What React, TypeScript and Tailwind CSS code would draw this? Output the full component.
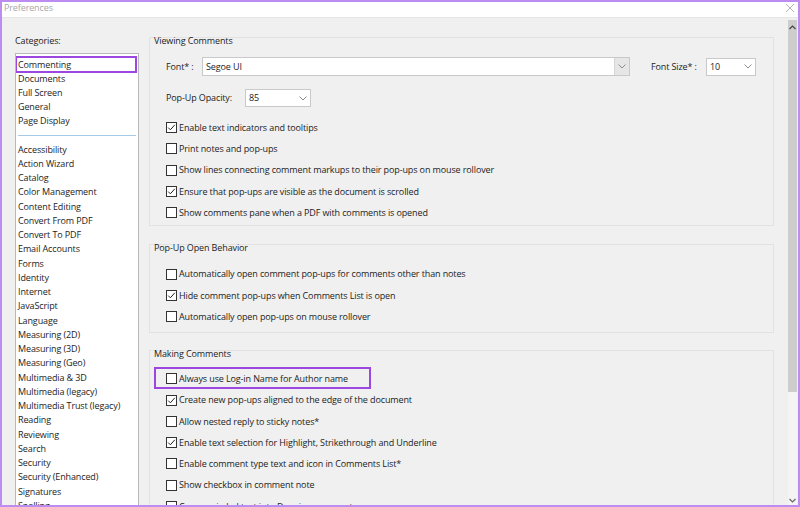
import React from 'react';

const FONT = { fontFamily: '"Open Sans", "Noto Sans", sans-serif', letterSpacing: '-0.12px' };

const topCategories = ['Commenting', 'Documents', 'Full Screen', 'General', 'Page Display'];
const moreCategories = [
  'Accessibility',
  'Action Wizard',
  'Catalog',
  'Color Management',
  'Content Editing',
  'Convert From PDF',
  'Convert To PDF',
  'Email Accounts',
  'Forms',
  'Identity',
  'Internet',
  'JavaScript',
  'Language',
  'Measuring (2D)',
  'Measuring (3D)',
  'Measuring (Geo)',
  'Multimedia & 3D',
  'Multimedia (legacy)',
  'Multimedia Trust (legacy)',
  'Reading',
  'Reviewing',
  'Search',
  'Security',
  'Security (Enhanced)',
  'Signatures',
  'Spelling',
];

const Chevron = () => (
  <svg width="8" height="5" viewBox="0 0 8 5" fill="none">
    <path d="M0.5 0.5 L4 4 L7.5 0.5" stroke="#8a8a8a" strokeWidth="1" />
  </svg>
);

const Checkbox = ({ checked, label }: { checked?: boolean; label: string }) => (
  <div className="flex items-center h-[21.3px]">
    <div className="w-[11px] h-[11px] border border-[#333] bg-white flex items-center justify-center shrink-0">
      {checked && (
        <svg width="9" height="9" viewBox="0 0 9 9" fill="none">
          <path d="M1.2 4.6 L3.4 6.8 L7.8 1.8" stroke="#222" strokeWidth="1" />
        </svg>
      )}
    </div>
    <span className="ml-[2px] whitespace-nowrap">{label}</span>
  </div>
);

const Group = ({ title, children, className }: { title: string; children: React.ReactNode; className?: string }) => (
  <div className={`border border-[#e2e2e2] ${className ?? ''}`}>
    <div className="pl-[4px] -mt-[4px] leading-[14px] h-[14px]">{title}</div>
    {children}
  </div>
);

const App = () => {
  return (
    <div
      className="w-[800px] h-[507px] border-2 border-[#bd8cf0] bg-[#f0f0f0] flex flex-col overflow-hidden text-[9px] text-[#1c1c1c]"
      style={FONT}
    >
      {/* Title bar */}
      <div className="h-[16px] bg-white flex items-center justify-between shrink-0 border-b border-[#e6e6e6]">
        <span className="pl-[2px] -mt-[3px] text-[9px] text-[#a8a8a8]">Preferences</span>
        <svg width="10" height="10" viewBox="0 0 10 10" className="mr-[3px] -mt-[3px]">
          <path d="M1 1 L9 9 M9 1 L1 9" stroke="#b5b5b5" strokeWidth="1" />
        </svg>
      </div>

      <div className="flex flex-1 min-h-0">
        {/* Categories */}
        <div className="w-[137px] pl-[13px] pt-[16px] flex flex-col shrink-0">
          <div className="leading-[14px] h-[19px]">Categories:</div>
          <div className="flex-1 bg-white border border-[#b9b9b9] border-b-0 pt-[2px] overflow-hidden">
            <div className="border-2 border-[#9b47e0] h-[17px] flex items-center pl-[1px] -ml-[1px] mr-[1px] -mb-[1.5px]">
              {topCategories[0]}
            </div>
            {topCategories.slice(1).map((c) => (
              <div key={c} className="h-[14.25px] leading-[14.25px] pl-[2px]">
                {c}
              </div>
            ))}
            <div className="mx-[2px] mt-[6px] mb-[7px] h-px bg-[#a7cbe6]" />
            {moreCategories.map((c) => (
              <div key={c} className="h-[14.25px] leading-[14.25px] pl-[2px] whitespace-nowrap">
                {c}
              </div>
            ))}
          </div>
        </div>

        {/* Settings */}
        <div className="flex-1 min-w-0 pl-[10px] pr-[14px] pt-[19px] overflow-hidden">
          <Group title="Viewing Comments" className="pb-[2px]">
            <div className="flex items-center mt-[9px] h-[19px] pl-[16px]">
              <span className="w-[36px]">Font* :</span>
              <div className="w-[428px] h-[19px] border border-[#c9c9c9] bg-white flex items-center">
                <span className="flex-1 pl-[3px]">Segoe UI</span>
                <div className="w-[15px] h-full bg-[#e6e6e6] border-l border-[#d6d6d6] flex items-center justify-center">
                  <Chevron />
                </div>
              </div>
              <span className="ml-[21px] w-[55px]">Font Size* :</span>
              <div className="w-[50px] h-[18px] border border-[#c9c9c9] bg-white flex items-center justify-between px-[3px]">
                <span>10</span>
                <Chevron />
              </div>
            </div>
            <div className="flex items-center mt-[13px] h-[18px] pl-[16px]">
              <span className="w-[79px]">Pop-Up Opacity:</span>
              <div className="w-[66px] h-[18px] border border-[#c9c9c9] bg-white flex items-center justify-between px-[3px]">
                <span>85</span>
                <Chevron />
              </div>
            </div>
            <div className="mt-[10px] pl-[16px]">
              <Checkbox checked label="Enable text indicators and tooltips" />
              <Checkbox label="Print notes and pop-ups" />
              <Checkbox label="Show lines connecting comment markups to their pop-ups on mouse rollover" />
              <Checkbox checked label="Ensure that pop-ups are visible as the document is scrolled" />
              <Checkbox label="Show comments pane when a PDF with comments is opened" />
            </div>
          </Group>

          <Group title="Pop-Up Open Behavior" className="mt-[18px] pb-[5px]">
            <div className="mt-[8px] pl-[16px]">
              <Checkbox label="Automatically open comment pop-ups for comments other than notes" />
              <Checkbox checked label="Hide comment pop-ups when Comments List is open" />
              <Checkbox label="Automatically open pop-ups on mouse rollover" />
            </div>
          </Group>

          <Group title="Making Comments" className="mt-[17px] pb-[6px]">
            <div className="mt-[6px]">
              <div className="ml-[4px] w-[217px] border-2 border-[#9b47e0] pl-[10px] h-[22px] flex items-center">
                <Checkbox label="Always use Log-in Name for Author name" />
              </div>
              <div className="pl-[16px]">
                <Checkbox checked label="Create new pop-ups aligned to the edge of the document" />
                <Checkbox label="Allow nested reply to sticky notes*" />
                <Checkbox checked label="Enable text selection for Highlight, Strikethrough and Underline" />
                <Checkbox label="Enable comment type text and icon in Comments List*" />
                <Checkbox label="Show checkbox in comment note" />
                <Checkbox label="Copy encircled text into Drawing comment pop-ups" />
              </div>
            </div>
          </Group>
        </div>

        {/* Scrollbar */}
        <div className="w-[9px] mr-[1px] flex flex-col shrink-0 pt-[2px]">
          <div className="h-[372px] bg-[#cdcdcd] flex justify-center pt-[5px]">
            <svg width="7" height="5" viewBox="0 0 7 5" fill="none">
              <path d="M0.5 4 L3.5 1 L6.5 4" stroke="#444" strokeWidth="1.2" />
            </svg>
          </div>
          <div className="flex-1 bg-[#f4f4f4] flex items-end justify-center pb-[2px]">
            <svg width="7" height="5" viewBox="0 0 7 5" fill="none">
              <path d="M0.5 1 L3.5 4 L6.5 1" stroke="#666" strokeWidth="1.2" />
            </svg>
          </div>
        </div>
      </div>
    </div>
  );
};

export default App;
